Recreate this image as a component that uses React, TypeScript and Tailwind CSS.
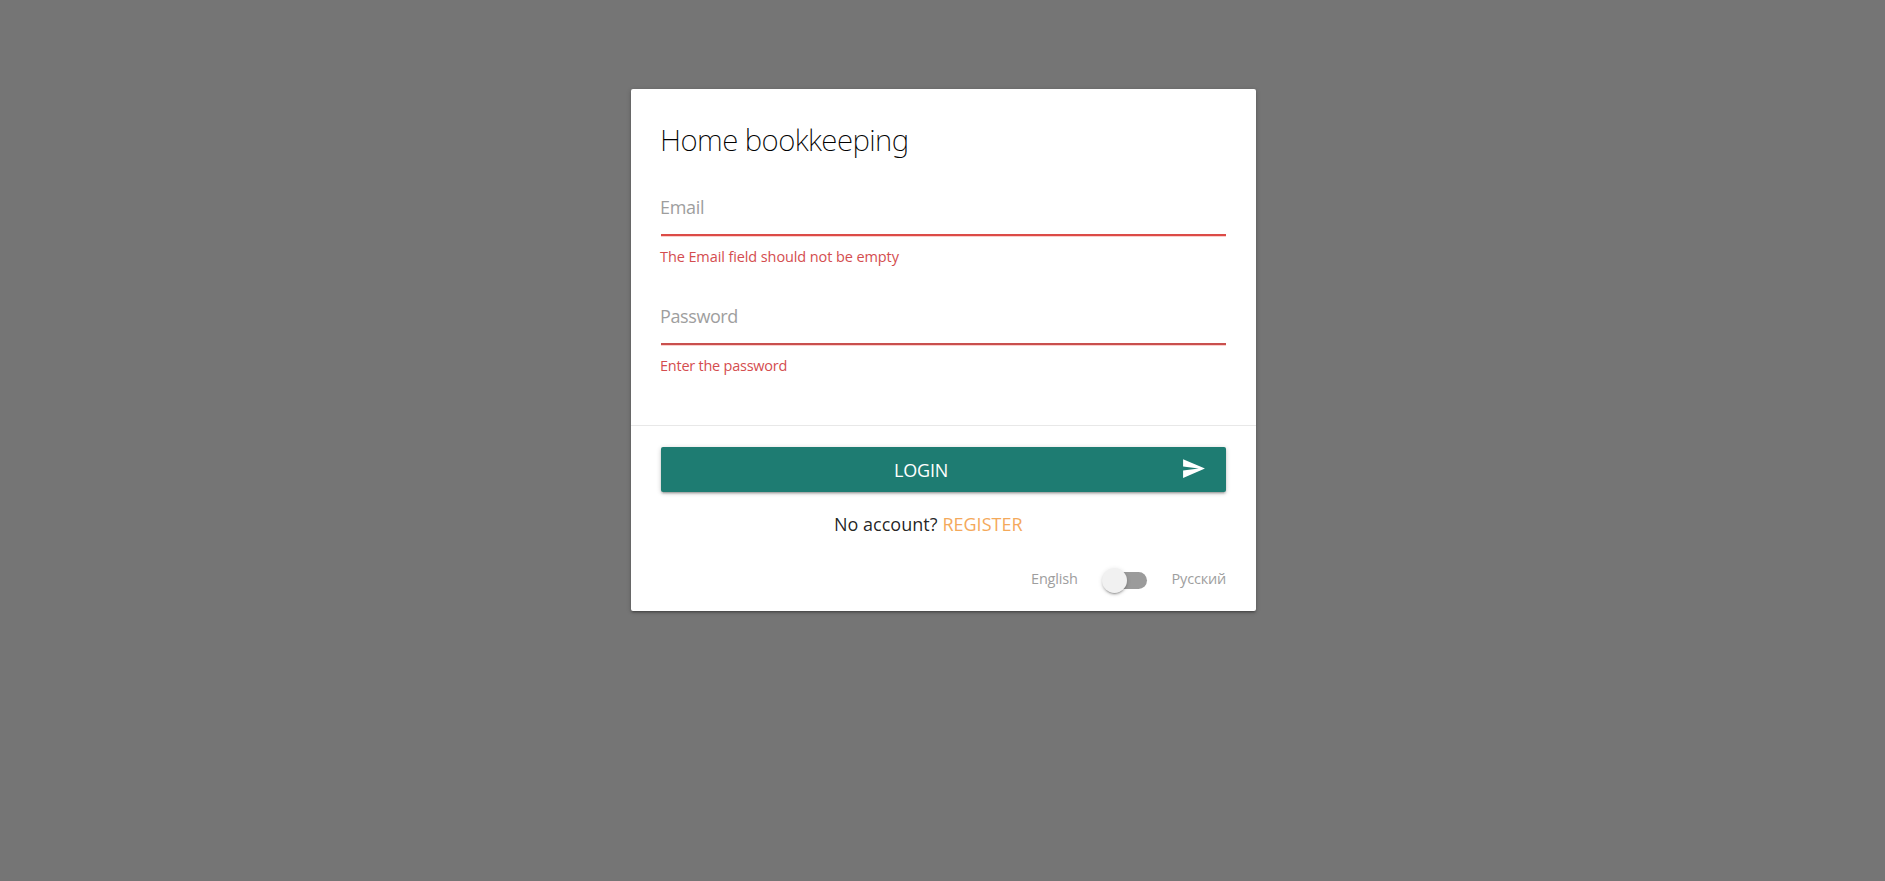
import { useState } from "react";

type FieldProps = { label: string; type: string; error: string; className: string; labelClass: string; errorClass: string; line: string };

function Field({ label, type, error, className, labelClass, errorClass, line }: FieldProps) {
  return (
    <div className={`flex flex-col whitespace-nowrap ${className}`}>
      <input
        type={type}
        aria-label={label}
        placeholder={label}
        className={`h-[54px] w-full border-b-2 bg-transparent pb-[2px] -indent-px text-[18px] shadow-[0_1px_0_0_rgba(244,67,54,0.25)] outline-none placeholder:text-[#9e9e9e] ${labelClass} ${line}`}
      />
      <span className={`-ml-px mt-[10px] self-start text-[14.5px] leading-[22px] text-[#d44d4f] ${errorClass}`}>{error}</span>
    </div>
  );
}

export default function App() {
  const [russian, setRussian] = useState(false);
  return (
    <main className="flex h-[881px] w-full justify-center bg-[#757575] pt-[89px] pl-[2px] font-['Open_Sans','Noto_Sans',sans-serif] text-black/87">
      <form className="flex h-[522px] w-[625px] flex-col rounded-[2px] bg-white shadow-[0_2px_2px_0_rgba(0,0,0,0.14),0_3px_1px_-2px_rgba(0,0,0,0.12),0_1px_5px_0_rgba(0,0,0,0.2)]">
        <div className="h-[336px] px-[30px] pt-[29px]">
          <h1 className="-ml-px h-[45px] w-max font-['Noto_Sans','Open_Sans',sans-serif] text-[29.5px] leading-[44px] font-extralight tracking-[-0.56px] text-black">Home bookkeeping</h1>
          <Field label="Email" type="email" error="The Email field should not be empty" className="mt-[19px] h-[109px]" labelClass="tracking-[-0.3px]" errorClass="tracking-[-0.1px]" line="border-[#dc4b47]" />
          <Field label="Password" type="password" error="Enter the password" className="" labelClass="tracking-[-0.4px]" errorClass="tracking-[-0.24px]" line="border-[#c9504e]" />
        </div>
        <div className="flex flex-1 flex-col border-t border-[#e8e8e8] px-[30px] pt-[21px]">
          <button type="button" className="flex h-[45px] w-full shrink-0 items-center rounded-[2px] bg-[#1e7c72] pr-[20px] text-[18px] text-white shadow-[0_2px_2px_0_rgba(0,0,0,0.14),0_3px_1px_-2px_rgba(0,0,0,0.12),0_1px_5px_0_rgba(0,0,0,0.2)]">
            <span className="mt-[2px] ml-[233px] tracking-[-0.2px]">LOGIN</span>
            <svg viewBox="0 0 24 24" className="mb-[2px] ml-auto size-[25px] fill-white">
              <path d="M2.01 21 23 12 2.01 3 2 10l15 2-15 2z" />
            </svg>
          </button>
          <p className="mt-[19px] flex h-[26px] gap-[5px] pl-[173px] text-[18px] leading-[26px] whitespace-nowrap">
            <span>No account?</span>
            <a href="#register" className="text-[#f4a95b]">REGISTER</a>
          </p>
          <div className="mt-[31px] flex h-[25px] items-center justify-end text-[14.5px] whitespace-nowrap text-[#9e9e9e]">
            <span className="mb-[4px] tracking-[-0.2px]">English</span>
            <button
              type="button"
              role="switch"
              aria-checked={russian}
              aria-label="Language"
              onClick={() => setRussian(!russian)}
              className="mr-[25px] ml-[24px] flex h-[25px] w-[45px] items-center"
            >
              <span className={`ml-[3px] flex h-[17px] w-[42px] items-center rounded-full bg-[#9b9b9b] ${russian ? "justify-end" : ""}`}>
                <span className="-ml-[3px] size-[25px] shrink-0 rounded-full bg-[#f1f1f1] shadow-[0_3px_1px_-2px_rgba(0,0,0,0.2),0_2px_2px_0_rgba(0,0,0,0.14),0_1px_5px_0_rgba(0,0,0,0.12)]" />
              </span>
            </button>
            <span className="mb-[4px] tracking-[-0.2px]">Русский</span>
          </div>
        </div>
      </form>
    </main>
  );
}
